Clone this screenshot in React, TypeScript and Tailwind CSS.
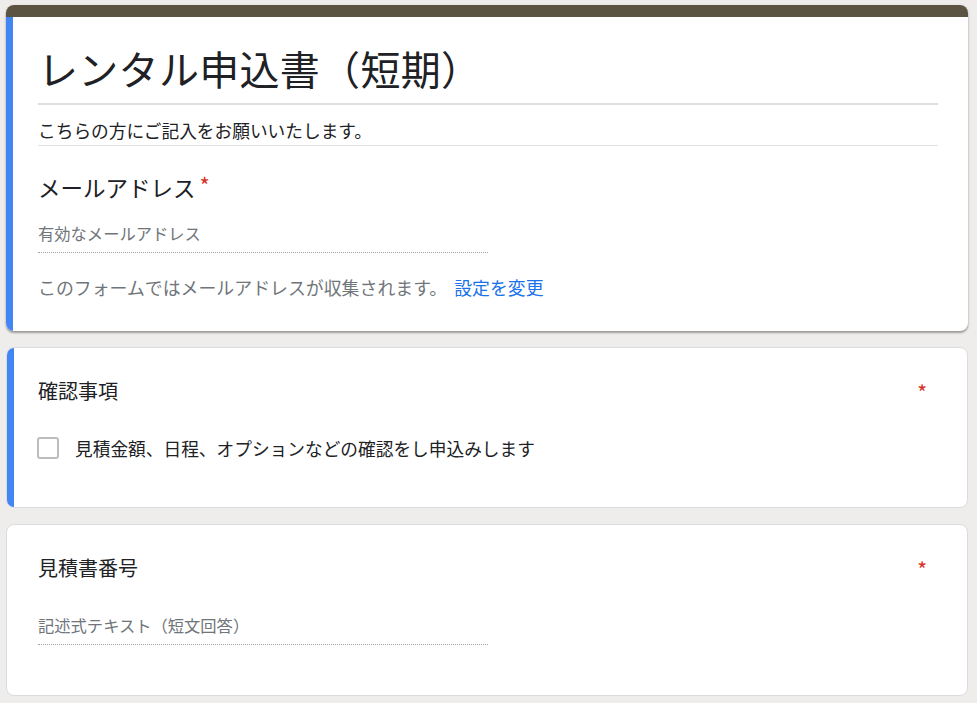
const font = { fontFamily: '"Noto Sans CJK JP", "Noto Sans", sans-serif' }

function Asterisk({ className = '' }: { className?: string }) {
  return <span className={`text-[#d93025] ${className}`}>*</span>
}

export default function App() {
  return (
    <div className="min-h-[703px] bg-[#efedeb] pl-[6px] pr-[9px] pt-[5px] pb-[8px] text-[#202124]" style={font}>
      {/* header card */}
      <div className="overflow-hidden rounded-lg bg-white shadow-[0_2px_2px_0_rgba(0,0,0,0.28),0_1px_3px_0_rgba(0,0,0,0.14)]">
        <div className="h-[12px] bg-[#5b5443]" />
        <div className="flex">
          <div className="w-[7px] shrink-0 bg-[#4285f4]" />
          <div className="flex-1 pl-[25px] pr-[30px] pt-[27px] pb-[32px]">
            <h1 className="text-[40px] leading-[48px] font-normal tracking-[0.3px]">レンタル申込書（短期）</h1>
            <div className="mt-[11px] h-[2px] bg-[#e0e0e0]" />
            <p className="mt-[13px] text-[17.7px] leading-[24px]">こちらの方にご記入をお願いいたします。</p>
            <div className="mt-[3px] h-px bg-[#e0e0e0]" />
            <div className="mt-[26px] flex items-start text-[22.5px] leading-[30px]">
              メールアドレス<Asterisk className="ml-[4px] text-[22px] leading-[24px]" />
            </div>
            <div className="mt-[19px] w-[450px] border-b border-dotted border-[#9aa0a6] pb-[7px] text-[16.3px] leading-[24px] text-[#70757a]">
              有効なメールアドレス
            </div>
            <p className="mt-[22px] text-[17.9px] leading-[24px] text-[#70757a]">
              このフォームではメールアドレスが収集されます。
              <span className="ml-[7px] text-[#1a73e8]">設定を変更</span>
            </p>
          </div>
        </div>
      </div>

      {/* confirmation */}
      <div className="mt-[16px] flex overflow-hidden rounded-lg border border-[#dadce0] bg-white">
        <div className="w-[7px] shrink-0 bg-[#4285f4]" />
        <div className="flex-1 pl-[23px] pr-[40px] pt-[29px] pb-[47px]">
          <div className="flex items-start justify-between">
            <span className="ml-px text-[20px] leading-[28px]">確認事項</span>
            <Asterisk className="mt-[3px] text-[21px] leading-[24px]" />
          </div>
          <label className="mt-[31px] flex items-center gap-[16px]">
            <span className="h-[22px] w-[22px] rounded-[3px] border-2 border-[#bdbdbd] bg-white" />
            <span className="text-[17.7px] leading-[24px]">見積金額、日程、オプションなどの確認をし申込みします</span>
          </label>
        </div>
      </div>

      {/* estimate number */}
      <div className="mt-[16px] rounded-lg border border-[#dadce0] bg-white pl-[31px] pr-[40px] pt-[29px] pb-[50px]">
        <div className="flex items-start justify-between">
          <span className="text-[20px] leading-[28px]">見積書番号</span>
          <Asterisk className="mt-[3px] text-[21px] leading-[24px]" />
        </div>
        <div className="mt-[31px] w-[450px] border-b border-dotted border-[#9aa0a6] pb-[7px] text-[16.3px] leading-[24px] text-[#70757a]">
          記述式テキスト（短文回答）
        </div>
      </div>
    </div>
  )
}
